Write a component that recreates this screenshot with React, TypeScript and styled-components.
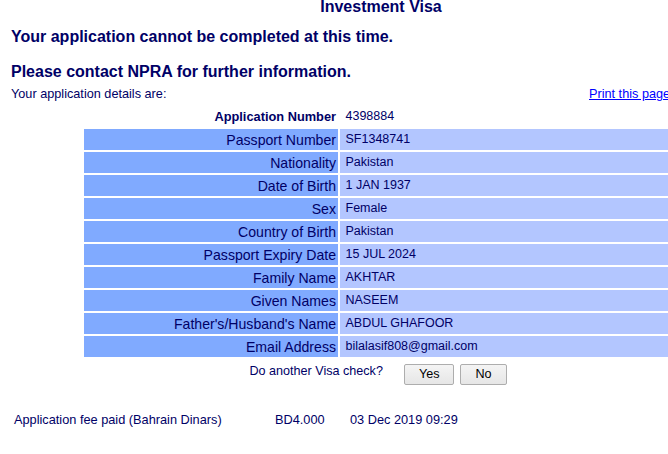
import React from "react";
import styled, { createGlobalStyle } from "styled-components";

const GlobalStyle = createGlobalStyle`
  html, body {
    margin: 0;
    padding: 0;
    overflow: hidden;
    background: #ffffff;
  }
  body {
    font-family: "Liberation Sans", Arial, sans-serif;
    color: #000066;
  }
`;

const Page = styled.div`
  width: 740px;
  padding-left: 11px;
`;

const Title = styled.h1`
  margin: 0;
  font-size: 16px;
  font-weight: bold;
  line-height: 14px;
  text-align: center;
`;

const Message = styled.h2<{ $top: number }>`
  margin: ${(p) => p.$top}px 0 0;
  font-size: 16px;
  font-weight: bold;
  line-height: 18px;
`;

const DetailsRow = styled.div`
  display: flex;
  margin-top: 6.5px;
  font-size: 12.7px;
  line-height: 15px;
`;

const PrintLink = styled.a`
  margin-left: auto;
  width: 162px;
  color: #0000ff;
  text-decoration: underline;
  cursor: pointer;
`;

const DetailsGrid = styled.div`
  display: grid;
  width: 594px;
  margin: 4px auto 0;
  grid-template-columns: 254px 1fr;
  grid-auto-rows: 21px;
  gap: 2px;
`;

const LabelCell = styled.div<{ $head?: boolean }>`
  display: flex;
  align-items: center;
  justify-content: flex-end;
  padding-right: 2px;
  background: ${(p) => (p.$head ? "transparent" : "#80aaff")};
  font-size: ${(p) => (p.$head ? "12.8px" : "14.1px")};
  font-weight: ${(p) => (p.$head ? "bold" : "normal")};
  line-height: 16px;
  white-space: nowrap;
`;

const ValueCell = styled.div<{ $head?: boolean }>`
  display: flex;
  align-items: center;
  padding-left: 5.5px;
  background: ${(p) => (p.$head ? "transparent" : "#b3c6ff")};
  font-size: 12.5px;
  line-height: 15px;
  white-space: nowrap;
`;

const AnotherRow = styled.div`
  display: flex;
  justify-content: center;
  align-items: flex-start;
  margin-top: 7px;
  padding-right: 6px;
  font-size: 12.6px;
  line-height: 15px;
`;

const AnotherText = styled.span`
  margin-right: 21px;
`;

const ButtonGroup = styled.div`
  display: flex;
  gap: 6px;
`;

const Button = styled.button`
  height: 21px;
  padding: 0 14px;
  border: 1px solid #adadad;
  border-radius: 2px;
  background: linear-gradient(#f4f4f4, #e6e6e6);
  color: #000000;
  font-family: "Liberation Sans", Arial, sans-serif;
  font-size: 12.6px;
  line-height: 15px;
`;

const FeeRow = styled.div`
  display: grid;
  grid-template-columns: 261px 75px auto;
  margin-top: 26.5px;
  padding-left: 3px;
  font-size: 12.75px;
  line-height: 15px;
`;

const rows: [string, string][] = [
  ["Passport Number", "SF1348741"],
  ["Nationality", "Pakistan"],
  ["Date of Birth", "1 JAN 1937"],
  ["Sex", "Female"],
  ["Country of Birth", "Pakistan"],
  ["Passport Expiry Date", "15 JUL 2024"],
  ["Family Name", "AKHTAR"],
  ["Given Names", "NASEEM"],
  ["Father's/Husband's Name", "ABDUL GHAFOOR"],
  ["Email Address", "bilalasif808@gmail.com"],
];

export default function App() {
  return (
    <>
      <GlobalStyle />
      <Page>
        <Title>Investment Visa</Title>
        <Message $top={14}>Your application cannot be completed at this time.</Message>
        <Message $top={16.5}>Please contact NPRA for further information.</Message>
        <DetailsRow>
          <span>Your application details are:</span>
          <PrintLink>Print this page</PrintLink>
        </DetailsRow>
        <DetailsGrid>
          <LabelCell $head>Application Number</LabelCell>
          <ValueCell $head>4398884</ValueCell>
          {rows.map(([label, value]) => (
            <React.Fragment key={label}>
              <LabelCell>{label}</LabelCell>
              <ValueCell>{value}</ValueCell>
            </React.Fragment>
          ))}
        </DetailsGrid>
        <AnotherRow>
          <AnotherText>Do another Visa check?</AnotherText>
          <ButtonGroup>
            <Button>Yes</Button>
            <Button>No</Button>
          </ButtonGroup>
        </AnotherRow>
        <FeeRow>
          <span>Application fee paid (Bahrain Dinars)</span>
          <span>BD4.000</span>
          <span>03 Dec 2019 09:29</span>
        </FeeRow>
      </Page>
    </>
  );
}
